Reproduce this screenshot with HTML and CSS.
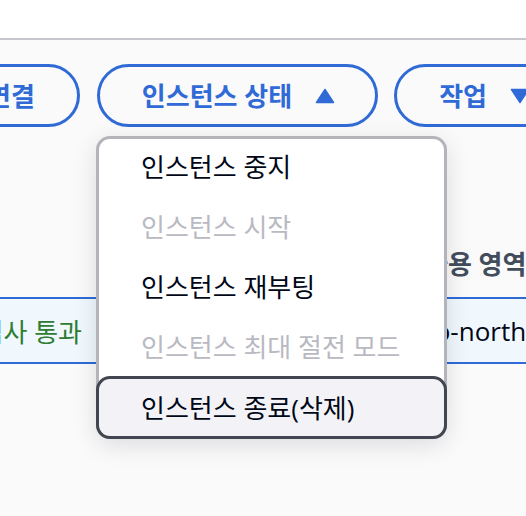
FILE: index.html
```html
<!DOCTYPE html>
<html lang="ko">
<head>
<meta charset="utf-8">
<title>인스턴스</title>
<link rel="stylesheet" href="styles.css">
</head>
<body>
<div class="topbar"></div>
<main class="content">
  <div class="toolbar">
    <button class="btn btn-first">연결</button>
    <button class="btn">인스턴스 상태
      <svg class="caret" width="20" height="16" viewBox="0 0 20 16"><path d="M10 1.5 L18.5 14.5 H1.5 Z" fill="currentColor" stroke="currentColor" stroke-width="1.5" stroke-linejoin="round"/></svg>
    </button>
    <button class="btn">작업
      <svg class="caret" width="20" height="16" viewBox="0 0 20 16"><path d="M1.5 1.5 H18.5 L10 14.5 Z" fill="currentColor" stroke="currentColor" stroke-width="1.5" stroke-linejoin="round"/></svg>
    </button>
  </div>
  <div class="table">
    <div class="thead">
      <div class="cell"></div>
      <div class="cell"></div>
      <div class="cell az-head">가용 영역</div>
    </div>
    <div class="trow selected">
      <div class="cell status ok">2/2개 검사 통과</div>
      <div class="cell"></div>
      <div class="cell">ap-northeast-2a</div>
    </div>
  </div>
  <ul class="menu">
    <li class="item">인스턴스 중지</li>
    <li class="item disabled">인스턴스 시작</li>
    <li class="item">인스턴스 재부팅</li>
    <li class="item disabled">인스턴스 최대 절전 모드</li>
    <li class="item highlighted">인스턴스 종료(삭제)</li>
  </ul>
</main>
</body>
</html>
```
FILE: styles.css
```css
html, body {
  margin: 0;
  padding: 0;
  overflow: hidden;
  height: 100%;
}
body {
  font-family: "Open Sans", "Noto Sans CJK KR", sans-serif;
  background: #fafafb;
  color: #000716;
}
.topbar {
  height: 38px;
  background: #ffffff;
  border-bottom: 2px solid #c6c6cd;
}
.content {
  background: #fafafb;
  height: 476px;
  overflow: hidden;
}
.toolbar {
  display: flex;
  gap: 16px;
  padding-top: 24px;
  margin-left: -58px;
  white-space: nowrap;
}
.btn {
  flex-shrink: 0;
  display: inline-flex;
  align-items: center;
  gap: 23px;
  height: 63px;
  box-sizing: border-box;
  padding: 0 40px 0 42px;
  border: 3px solid #2f6ad6;
  border-radius: 32px;
  background: transparent;
  color: #2f6ad6;
  font-family: "Open Sans", "Noto Sans CJK KR", sans-serif;
  font-weight: 700;
  font-size: 26px;
  line-height: 1;
}
.btn-first {
  padding: 0 42px;
  margin-right: 1px;
}
.caret {
  display: block;
}
.table {
  margin-top: 102px;
}
.thead,
.trow {
  display: grid;
  grid-template-columns: 96px 324px 1fr;
  white-space: nowrap;
  font-size: 26px;
}
.thead {
  height: 68px;
  align-items: center;
  font-weight: 700;
  color: #414d5c;
}
.az-head {
  padding-left: 4px;
}
.trow {
  height: 67px;
  box-sizing: border-box;
  align-items: center;
  border-top: 2px solid #2f6ad6;
  border-bottom: 2px solid #2f6ad6;
  background: #f0f8fe;
  color: #000716;
}
.status {
  justify-self: end;
  padding-right: 14px;
}
.ok {
  color: #2e7d32;
}
.menu {
  position: absolute;
  left: 96px;
  top: 136px;
  width: 351px;
  box-sizing: border-box;
  margin: 0;
  padding: 0;
  list-style: none;
  background: #ffffff;
  border: 3px solid #b4b4bb;
  border-radius: 14px;
  box-shadow: 0 6px 24px rgba(0, 7, 22, 0.12);
  font-size: 26px;
}
.item {
  height: 60px;
  box-sizing: border-box;
  display: flex;
  align-items: center;
  padding-left: 42px;
  white-space: nowrap;
  color: #000716;
}
.item:first-child {
  height: 57px;
  padding-bottom: 4px;
}
.item.disabled {
  color: #b9b9c1;
}
.item.highlighted {
  height: 63px;
  margin: 0 -3px -3px -3px;
  padding-left: 42px;
  padding-bottom: 2px;
  border: 3px solid #424650;
  border-radius: 14px;
  background: #f3f3f7;
}
```
